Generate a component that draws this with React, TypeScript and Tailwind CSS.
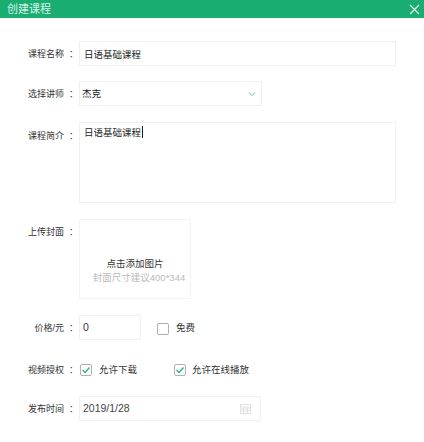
import React from "react";

const cjk = { fontFamily: '"Liberation Sans","Noto Sans CJK SC",sans-serif' };

function Label({ name, top }: { name: string; top: string }) {
  return (
    <div className={`w-[75px] shrink-0 pr-px text-right text-[9px] leading-[24px] text-[#333] whitespace-nowrap ${top}`}>
      <span className="mr-[5px]">{name}</span>：
    </div>
  );
}

function Check({ checked }: { checked?: boolean }) {
  return (
    <span className="flex h-[12px] w-[12px] items-center justify-center rounded-[2px] border border-[#b0b0b0] bg-white">
      {checked && (
        <svg width="10" height="10" viewBox="0 0 10 10" fill="none">
          <path d="M1.5 5 L4 7.5 L8.5 2.5" stroke="#2fb586" strokeWidth="1.4" />
        </svg>
      )}
    </span>
  );
}

export default function App() {
  return (
    <div className="h-[442px] w-[424px] overflow-hidden bg-white text-[#333]" style={cjk}>
      <div className="flex h-[18px] items-center justify-between bg-[#19ad72] pl-[7px] pr-[4px] text-[11px] text-[#d5f2e6]">
        <span>创建课程</span>
        <svg width="11" height="11" viewBox="0 0 11 11" fill="none">
          <path d="M1 1 L10 10 M10 1 L1 10" stroke="#e6f7f0" strokeWidth="1.1" />
        </svg>
      </div>
      <div className="flex flex-col pl-[4px] pt-[23px]">
        <div className="flex">
          <Label name="课程名称" top="pt-px" />
          <div className="h-[25px] w-[317px] border border-[#f0f0f0] pl-[4px] pt-px text-[9.5px] leading-[23px] text-[#222]">日语基础课程</div>
        </div>
        <div className="mt-[15px] flex">
          <Label name="选择讲师" top="pt-px" />
          <div className="flex h-[25px] w-[183px] items-center justify-between border border-[#f0f0f0] pl-[2px] pr-[5px] pt-px text-[9.5px] text-[#222]">
            <span>杰克</span>
            <svg width="8" height="6" viewBox="0 0 8 6" fill="none">
              <path d="M1 1.5 L4 4.5 L7 1.5" stroke="#9fdcc4" strokeWidth="1.2" />
            </svg>
          </div>
        </div>
        <div className="mt-[16px] flex">
          <Label name="课程简介" top="pt-[2px]" />
          <div className="h-[81px] w-[317px] border border-[#f0f0f0] pl-[4px] pt-[1px] text-[9.5px] leading-[17px] text-[#222]">
            日语基础课程<span className="ml-[1px] inline-block h-[12px] w-px bg-[#222] align-[-2px]" />
          </div>
        </div>
        <div className="mt-[16px] flex">
          <Label name="上传封面" top="pt-px" />
          <div className="flex h-[80px] w-[112px] flex-col items-center border border-[#f3f3f3] pt-[38px] text-[9.5px] leading-[12px]">
            <span className="text-[#333]">点击添加图片</span>
            <span className="ml-[8px] mt-[2px] whitespace-nowrap text-[#bbb]">封面尺寸建议400*344</span>
          </div>
        </div>
        <div className="mt-[16px] flex">
          <Label name="价格/元" top="pt-px" />
          <div className="h-[25px] w-[62px] border border-[#f0f0f0] pl-[3px] text-[10.5px] leading-[23px]">0</div>
          <div className="ml-[16px] flex items-center gap-[7px] pt-[2px] text-[9.5px] text-[#333]">
            <Check />
            <span>免费</span>
          </div>
        </div>
        <div className="mt-[18px] flex items-center">
          <Label name="视频授权" top="" />
          <div className="ml-[1px] flex items-center gap-[7px] text-[9.5px] text-[#333]">
            <Check checked />
            <span>允许下载</span>
          </div>
          <div className="ml-[37px] flex items-center gap-[6px] text-[9.5px] text-[#333]">
            <Check checked />
            <span>允许在线播放</span>
          </div>
        </div>
        <div className="mt-[14px] flex">
          <Label name="发布时间" top="pt-px" />
          <div className="flex h-[25px] w-[182px] items-center justify-between border border-[#f0f0f0] pl-[3px] pr-[9px] text-[10.5px] text-[#444]">
            <span>2019/1/28</span>
            <svg width="11" height="11" viewBox="0 0 11 11" fill="none" stroke="#e2e2e2" strokeWidth="1">
              <rect x="0.5" y="1.5" width="10" height="9" />
              <path d="M0.5 4 H10.5 M0.5 6 H10.5 M0.5 8 H10.5 M3.5 4 V10.5 M7.5 4 V10.5" />
            </svg>
          </div>
        </div>
      </div>
    </div>
  );
}
